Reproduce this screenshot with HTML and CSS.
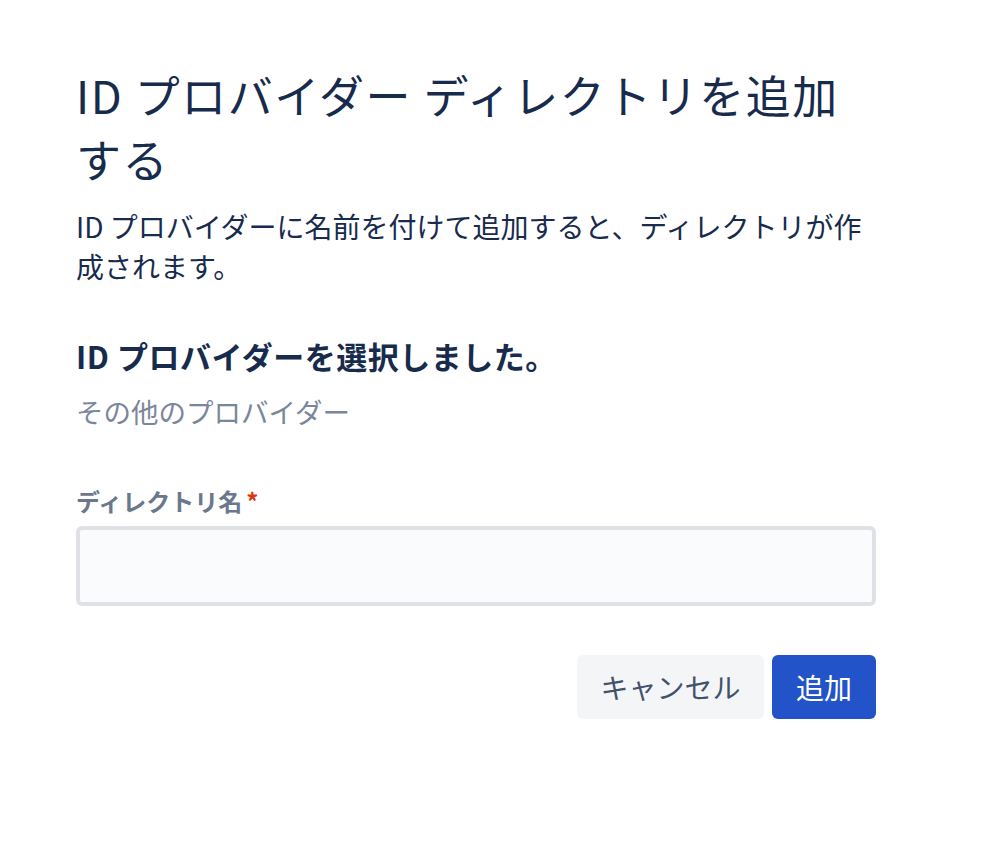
FILE: index.html
```html
<!DOCTYPE html>
<html lang="ja">
<head>
<meta charset="utf-8">
<title>ID プロバイダー ディレクトリを追加する</title>
<link rel="stylesheet" href="styles.css">
</head>
<body>
<main class="page">
  <h1 class="title">ID プロバイダー ディレクトリを追加する</h1>
  <p class="desc">ID プロバイダーに名前を付けて追加すると、ディレクトリが作成されます。</p>
  <section class="selected">
    <h2 class="sub">ID プロバイダーを選択しました。</h2>
    <p class="provider">その他のプロバイダー</p>
  </section>
  <form class="form">
    <label class="label" for="dirname">ディレクトリ名<span class="req">*</span></label>
    <input class="input" id="dirname" type="text">
    <div class="actions">
      <button type="button" class="btn btn-cancel">キャンセル</button>
      <button type="button" class="btn btn-primary">追加</button>
    </div>
  </form>
</main>
</body>
</html>
```

FILE: styles.css
```css
* { box-sizing: border-box; }
html, body { margin: 0; padding: 0; background: #ffffff; }
body {
  font-family: "Noto Sans CJK JP", "Noto Sans", sans-serif;
  color: #172B4D;
}
.page {
  width: 800px;
  margin-left: 76px;
  padding-top: 63px;
}
.title {
  margin: 0;
  font-size: 45px;
  font-weight: 400;
  line-height: 64px;
  letter-spacing: 1.5px;
  color: #172B4D;
}
.desc {
  margin: 15px 0 0;
  font-size: 28px;
  line-height: 40px;
  color: #172B4D;
}
.selected { margin-top: 50px; }
.sub {
  margin: 0;
  font-size: 31px;
  font-weight: 700;
  line-height: 40px;
  letter-spacing: 0.5px;
  color: #172B4D;
}
.provider {
  margin: 15px 0 0;
  font-size: 27.5px;
  line-height: 40px;
  color: #7A869A;
}
.form { margin-top: 54px; display: flex; flex-direction: column; }
.label {
  font-size: 24px;
  font-weight: 700;
  line-height: 32px;
  color: #6B778C;
}
.req { color: #DE350B; margin-left: 4px; }
.input {
  margin-top: 9px;
  width: 800px;
  height: 80px;
  border: 4px solid #DFE1E6;
  border-radius: 6px;
  background: #FAFBFC;
  outline: none;
  font: inherit;
  font-size: 28px;
  padding: 0 16px;
}
.actions {
  margin-top: 49px;
  display: flex;
  justify-content: flex-end;
  gap: 8px;
}
.btn {
  height: 64px;
  border: none;
  border-radius: 6px;
  font-family: inherit;
  font-size: 28px;
  padding: 0;
  white-space: nowrap;
  cursor: pointer;
}
.btn-cancel { width: 187px; background: #F4F5F7; color: #42526E; }
.btn-primary { width: 104px; background: #2353C8; color: #ffffff; }
```
